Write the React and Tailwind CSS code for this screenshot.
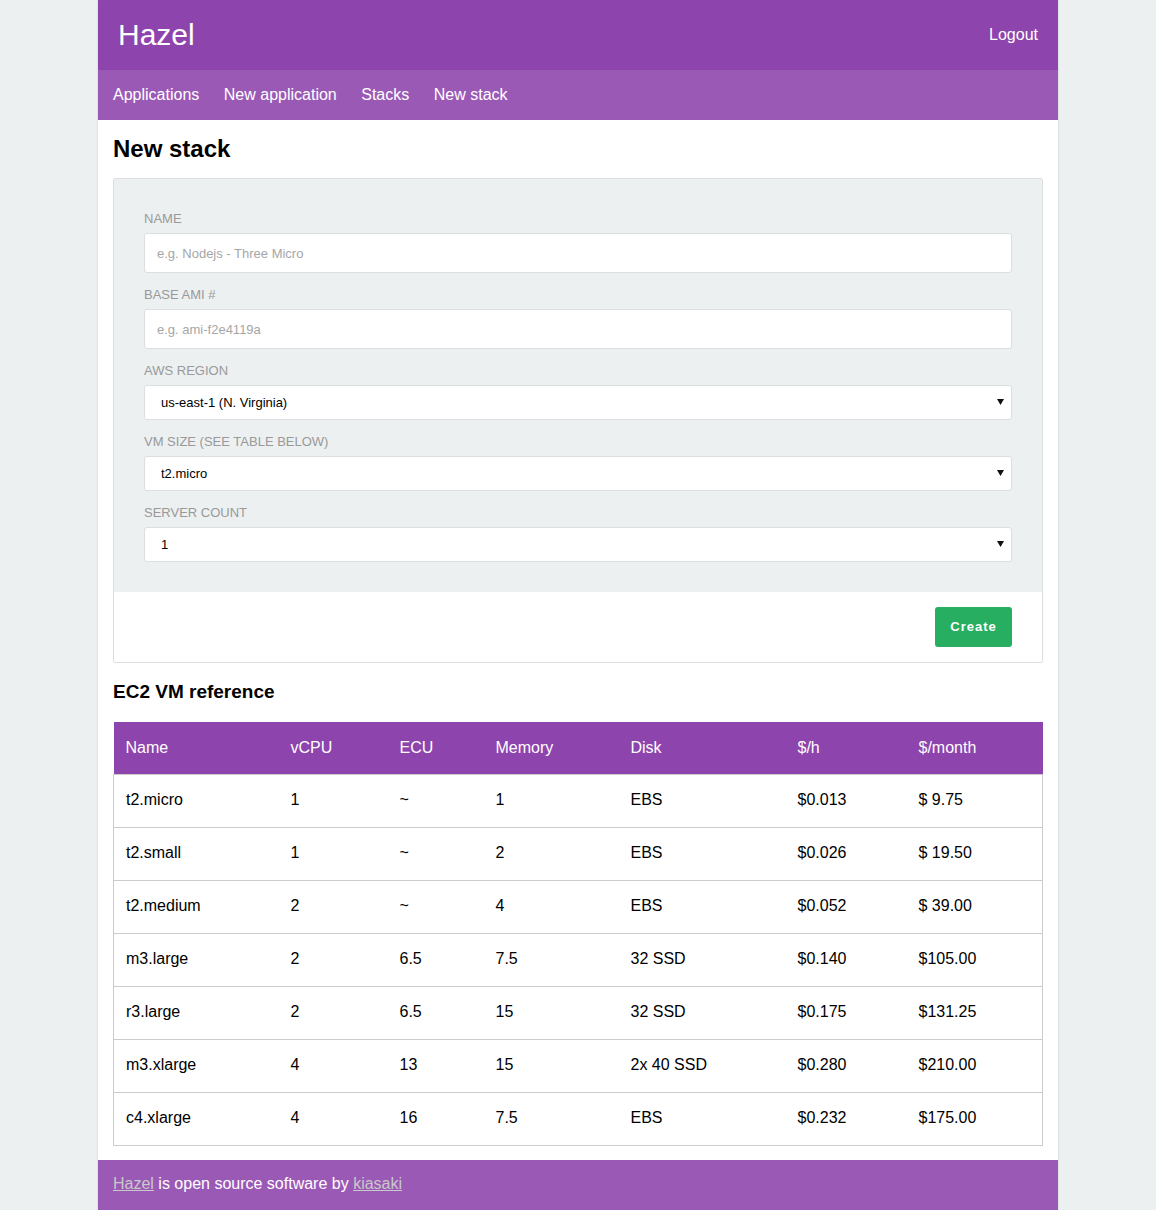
import React from 'react'

const rows = [
  ['t2.micro', '1', '~', '1', 'EBS', '$0.013', '$ 9.75'],
  ['t2.small', '1', '~', '2', 'EBS', '$0.026', '$ 19.50'],
  ['t2.medium', '2', '~', '4', 'EBS', '$0.052', '$ 39.00'],
  ['m3.large', '2', '6.5', '7.5', '32 SSD', '$0.140', '$105.00'],
  ['r3.large', '2', '6.5', '15', '32 SSD', '$0.175', '$131.25'],
  ['m3.xlarge', '4', '13', '15', '2x 40 SSD', '$0.280', '$210.00'],
  ['c4.xlarge', '4', '16', '7.5', 'EBS', '$0.232', '$175.00'],
]

const cols = ['w-[165px]', 'w-[109px]', 'w-[96px]', 'w-[135px]', 'w-[167px]', 'w-[121px]', '']

function Label({ children }) {
  return <label className="block h-[18px] leading-[20px] text-[13px] uppercase text-[#999999] mb-[6px]">{children}</label>
}

function Select({ value }) {
  return (
    <div className="relative mb-3">
      <select className="appearance-none w-full h-[35px] bg-white border border-[#dcdfe1] rounded-[3px] pl-4 text-[13px] text-black outline-none">
        <option>{value}</option>
      </select>
      <svg className="absolute right-[8px] top-[14px] pointer-events-none" width="7" height="6" viewBox="0 0 7 6">
        <path d="M0 0h7L3.5 6z" fill="#111" />
      </svg>
    </div>
  )
}

export default function App() {
  return (
    <div className="min-h-screen bg-[#ecf0f1] font-['Liberation_Sans',Arial,sans-serif]">
      <div className="w-[960px] mx-auto bg-white shadow-[0_0_2px_rgba(0,0,0,0.15)]">
        <header className="h-[70px] bg-[#8e44ad] flex items-center justify-between px-5">
          <span className="text-white text-[30px] leading-none">Hazel</span>
          <a className="text-white text-base">Logout</a>
        </header>
        <nav className="h-[50px] bg-[#9b59b6] flex items-center gap-[24.5px] px-[15px] text-white text-base">
          <a>Applications</a>
          <a>New application</a>
          <a>Stacks</a>
          <a>New stack</a>
        </nav>

        <main className="px-[15px] pb-[14px]">
          <h1 className="text-[24px] font-bold text-black h-[58px] flex items-center">New stack</h1>

          <div className="border border-[#dcdfe1] rounded-[2px]">
            <div className="bg-[#ecf0f1] px-[30px] pt-[30px] pb-[18px]">
              <Label>Name</Label>
              <input className="w-full h-10 bg-white border border-[#dcdfe1] rounded-[3px] px-3 text-[13px] placeholder-[#a6a6a6] mb-3 outline-none" placeholder="e.g. Nodejs - Three Micro" />
              <Label>Base AMI #</Label>
              <input className="w-full h-10 bg-white border border-[#dcdfe1] rounded-[3px] px-3 text-[13px] placeholder-[#a6a6a6] mb-3 outline-none" placeholder="e.g. ami-f2e4119a" />
              <Label>AWS Region</Label>
              <Select value="us-east-1 (N. Virginia)" />
              <Label>VM size (see table below)</Label>
              <Select value="t2.micro" />
              <Label>Server count</Label>
              <Select value="1" />
            </div>
            <div className="h-[70px] flex items-center justify-end pr-[30px]">
              <button className="h-10 w-[77px] bg-[#27ae60] text-white text-[13px] font-bold tracking-[1px] rounded-[3px]">Create</button>
            </div>
          </div>

          <h2 className="text-[19px] font-bold text-black h-[59px] flex items-center">EC2 VM reference</h2>

          <table className="w-full border-collapse text-base">
            <thead>
              <tr className="bg-[#8e44ad] text-white h-[52px]">
                {['Name', 'vCPU', 'ECU', 'Memory', 'Disk', '$/h', '$/month'].map((h, i) => (
                  <th key={h} className={`${cols[i]} text-left font-normal px-3`}>{h}</th>
                ))}
              </tr>
            </thead>
            <tbody>
              {rows.map(r => (
                <tr key={r[0]} className="h-[53px] border border-[#cccccc]">
                  {r.map((c, i) => (
                    <td key={i} className="px-3 pb-[2px] text-black">{c}</td>
                  ))}
                </tr>
              ))}
            </tbody>
          </table>
        </main>

        <footer className="h-[50px] bg-[#9b59b6] flex items-center px-[15px] pb-[2px] text-white text-base">
          <a className="underline text-[#c9c9c9]">Hazel</a>
          <span>&nbsp;is open source software by&nbsp;</span>
          <a className="underline text-[#c9c9c9]">kiasaki</a>
        </footer>
      </div>
    </div>
  )
}
